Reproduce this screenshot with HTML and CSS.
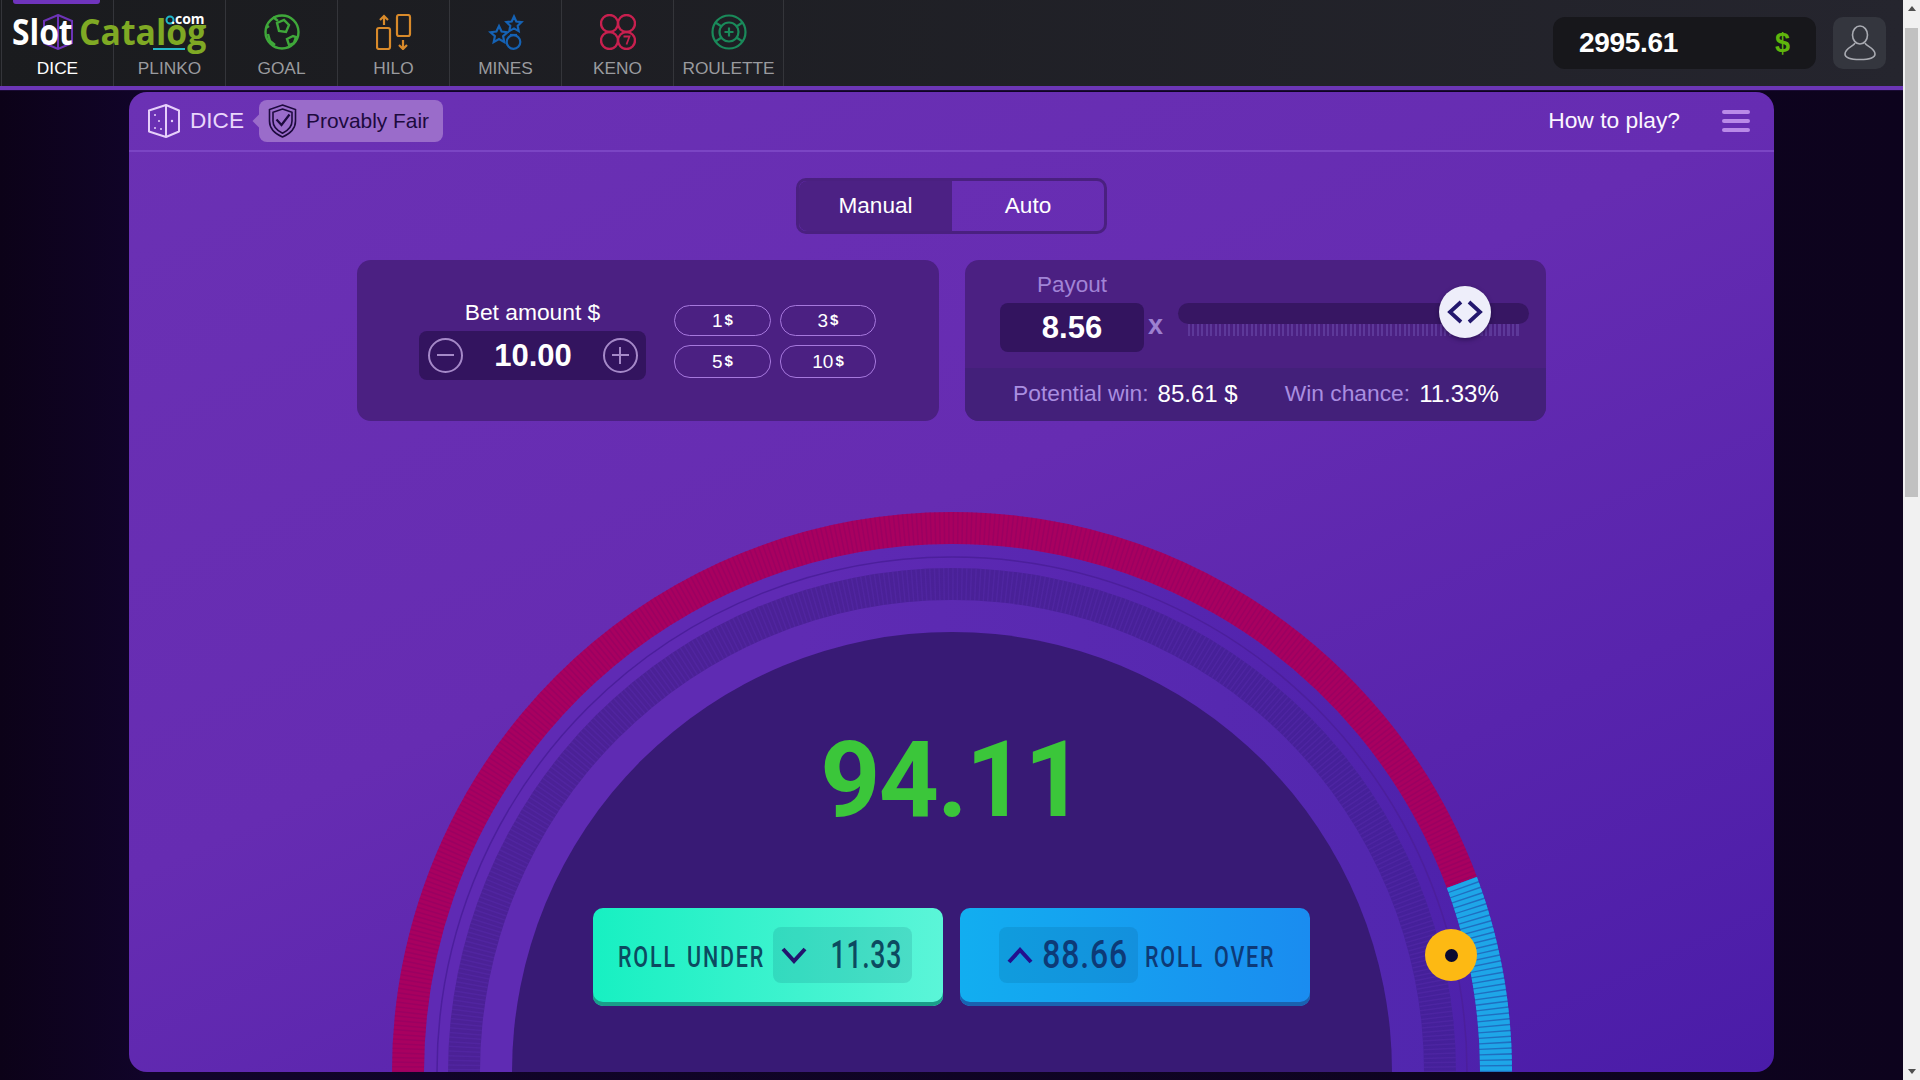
FILE: index.html
```html
<!DOCTYPE html>
<html lang="en">
<head>
<meta charset="utf-8">
<title>Dice</title>
<link rel="stylesheet" href="styles.css">
</head>
<body>
<div class="page">
  <div class="app">
    <header class="topbar">
      <nav class="tabs">
        <a class="tab active"><svg class="tab-icon" viewBox="0 0 36 36" fill="none" stroke="#6d33b8" stroke-width="2"><path d="M18 1l14 6v22l-14 6-14-6V7z"/><path d="M18 1v34"/></svg><span>DICE</span></a>
        <a class="tab"><svg class="tab-icon" viewBox="0 0 36 36" fill="none" stroke="#1fb6c9" stroke-width="2"><circle cx="18" cy="6" r="3.500"/></svg><span>PLINKO</span></a>
        <a class="tab"><svg class="tab-icon" viewBox="0 0 36 36" fill="none" stroke="#3fa83a" stroke-width="2.400"><circle cx="18" cy="18" r="16.500"/><path d="M13 9l7-3 5 5-3 7-7-1z"/><path d="M23 25l6-3 3 1-2 6-5 2z"/><path d="M4 20l2 7 5 4M9 3l5 4M2 14l3-2"/></svg><span>GOAL</span></a>
        <a class="tab"><svg class="tab-icon" viewBox="0 0 36 36" fill="none" stroke="#d98a2a" stroke-width="2.200"><rect x="1" y="14" width="13" height="21" rx="2"/><rect x="21" y="1" width="13" height="21" rx="2"/><path d="M8 11V2M4 6l4-4 4 4M27 26v9M23 31l4 4 4-4"/></svg><span>HILO</span></a>
        <a class="tab"><svg class="tab-icon" viewBox="0 0 36 36" fill="none" stroke="#1562b4" stroke-width="2.200"><path d="M26 2.500l2.300 5 5.200.6-3.800 3.700 1 5.300-4.700-2.700-4.700 2.700 1-5.300-3.800-3.700 5.200-.6z"/><path d="M11 12l2.600 5.500 5.900.7-4.400 4 1.200 5.900-5.300-3-5.300 3 1.200-5.900-4.400-4 5.900-.7z"/><circle cx="25.500" cy="28" r="6.800"/><path d="M22 21h7"/></svg><span>MINES</span></a>
        <a class="tab"><svg class="tab-icon" viewBox="0 0 36 36" fill="none" stroke="#c8204f" stroke-width="2.400"><circle cx="9.500" cy="9.500" r="8.500"/><circle cx="26.500" cy="9.500" r="8.500"/><circle cx="9.500" cy="26.500" r="8.500"/><circle cx="26.500" cy="26.500" r="8.500"/><path d="M23.500 22.500h6l-3 8" stroke-width="1.800"/></svg><span>KENO</span></a>
        <a class="tab"><svg class="tab-icon" viewBox="0 0 36 36" fill="none" stroke="#1a8a5a" stroke-width="2.200"><circle cx="18" cy="18" r="16.500"/><circle cx="18" cy="18" r="9.500"/><path d="M18 13.500v9M13.500 18h9"/><path d="M4.500 8.500l6 4M31.500 8.500l-6 4M4.500 27.500l6-4M31.500 27.500l-6-4"/></svg><span>ROULETTE</span></a>
      </nav>
      <div class="account">
        <div class="balance"><span class="balance-value">2995.61</span><span class="balance-cur">$</span></div>
        <button class="user"><svg width="32" height="36" viewBox="0 0 32 36" fill="none" stroke="#a9abb2" stroke-width="1.600"><ellipse cx="16" cy="10" rx="7.500" ry="9"/><path d="M11 18c-1 3-10 5-10 11 0 4 7 5.500 15 5.500S31 33 31 29c0-6-9-8-10-11"/></svg></button>
      </div>
      <div class="logo"><span class="logo-slot">Slot</span><span class="logo-cat">Catalog</span><span class="logo-com">.com</span><span class="logo-line"></span></div>
    </header>

    <main class="stagewrap">
      <section class="panel">
        <div class="panel-head">
          <div class="head-left">
            <svg class="dice-icon" width="34" height="34" viewBox="0 0 34 34" fill="none" stroke="#e6cffa" stroke-width="2"><path d="M19 1l13 5.500v21L19 33 2 27.500v-21z" stroke-linejoin="round"/><path d="M19 1v32" /><circle cx="8" cy="11" r="1" fill="#e6cffa" stroke="none"/><circle cx="12" cy="17" r="1" fill="#e6cffa" stroke="none"/><circle cx="8" cy="24" r="1" fill="#e6cffa" stroke="none"/><circle cx="14" cy="25" r="1" fill="#e6cffa" stroke="none"/><circle cx="25" cy="17" r="1.200" fill="#e6cffa" stroke="none"/></svg>
            <span class="head-title">DICE</span>
            <div class="fair"><svg width="29" height="34" viewBox="0 0 29 34" fill="none" stroke="#1d0a3e" stroke-width="1.600"><path d="M14.500 1L27.500 5.500V17c0 8-6 13-13 16C7.500 30 1.500 25 1.500 17V5.500z"/><path d="M14.500 5L24 8.300V17c0 6-4.500 9.800-9.500 12.200C9.500 26.800 5 23 5 17V8.300z"/><path d="M8.500 15.500l5 5.500 8-10.500" stroke-width="2.200"/></svg><span>Provably Fair</span></div>
          </div>
          <div class="head-right">
            <span class="howto">How to play?</span>
            <div class="burger"><i></i><i></i><i></i></div>
          </div>
        </div>

        <div class="mode">
          <button class="mode-btn on">Manual</button>
          <button class="mode-btn">Auto</button>
        </div>

        <div class="cards">
          <div class="card bet">
            <div class="bet-main">
              <div class="bet-label">Bet amount $</div>
              <div class="bet-input">
                <span class="round"><i class="bar-h"></i></span>
                <span class="bet-value">10.00</span>
                <span class="round"><i class="bar-h"></i><i class="bar-v"></i></span>
              </div>
            </div>
            <div class="chips">
              <button class="chip">1<small>$</small></button>
              <button class="chip">3<small>$</small></button>
              <button class="chip">5<small>$</small></button>
              <button class="chip">10<small>$</small></button>
            </div>
          </div>
          <div class="card payout">
            <div class="payout-top">
              <div class="payout-col">
                <div class="payout-label">Payout</div>
                <div class="payout-input">8.56</div>
              </div>
              <span class="payout-x">x</span>
              <div class="slider">
                <div class="track"></div>
                <div class="ticks"></div>
                <div class="thumb"><svg width="36" height="24" viewBox="0 0 36 24" fill="none" stroke="#23186e" stroke-width="3.800"><path d="M14 2L3 12l11 10M22 2l11 10-11 10"/></svg></div>
              </div>
            </div>
            <div class="payout-bottom">
              <span class="stat-label">Potential win:</span><span class="stat-value">85.61 $</span>
              <span class="stat-label second">Win chance:</span><span class="stat-value">11.33%</span>
            </div>
          </div>
        </div>

        <div class="stage">
          <svg class="wheel" viewBox="129 421 1645 651" width="1645" height="651" fill="none">
            <defs>
              <linearGradient id="ringLight" gradientUnits="userSpaceOnUse" x1="800" y1="0" x2="1500" y2="0"><stop offset="0" stop-color="#5f2bb3"/><stop offset="1" stop-color="#5026ae"/></linearGradient>
              <linearGradient id="ringDark" gradientUnits="userSpaceOnUse" x1="800" y1="0" x2="1500" y2="0"><stop offset="0" stop-color="#4b2196"/><stop offset="1" stop-color="#44209a"/></linearGradient>
              <linearGradient id="ringMid" gradientUnits="userSpaceOnUse" x1="800" y1="0" x2="1500" y2="0"><stop offset="0" stop-color="#5f2ab4"/><stop offset="1" stop-color="#4d21ab"/></linearGradient>
            </defs>
            <circle cx="952" cy="1072" r="528" fill="url(#ringMid)"/>
            <circle cx="952" cy="1072" r="515" stroke="#4c1f9c" stroke-width="1.500"/>
            <circle cx="952" cy="1072" r="504" fill="url(#ringDark)"/>
            <circle cx="952" cy="1072" r="488" stroke="#5a2cae" stroke-width="32" stroke-dasharray="1.500 3" opacity=".4"/>
            <circle cx="952" cy="1072" r="472" fill="url(#ringLight)"/>
            <circle cx="952" cy="1072" r="440" fill="#381a75"/>
            <path d="M408 1072A544 544 0 0 1 1461.900 882.400" stroke="#a80060" stroke-width="32"/>
            <path d="M408 1072A544 544 0 0 1 1461.900 882.400" stroke="#8c0064" stroke-width="32" stroke-dasharray="1.500 3" opacity=".45"/>
            <path d="M1461.900 882.400A544 544 0 0 1 1496 1072" stroke="#1f6fc0" stroke-width="32"/>
            <path d="M1461.900 882.400A544 544 0 0 1 1496 1072" stroke="#1ea6e8" stroke-width="32" stroke-dasharray="4.300 1.400"/>
          </svg>
          <div class="result">94.11</div>
          <div class="rolls">
            <button class="roll under">
              <span class="roll-text"><span class="squeeze">ROLL UNDER</span></span>
              <span class="roll-box"><svg width="26" height="17" viewBox="0 0 26 17" fill="none" stroke="#23156e" stroke-width="4"><path d="M2 2l11 12L24 2"/></svg><b class="roll-num">11.33</b></span>
            </button>
            <button class="roll over">
              <span class="roll-box"><svg width="26" height="17" viewBox="0 0 26 17" fill="none" stroke="#23108e" stroke-width="4"><path d="M2 15L13 3l11 12"/></svg><b class="roll-num">88.66</b></span>
              <span class="roll-text"><span class="squeeze">ROLL OVER</span></span>
            </button>
          </div>
          <div class="marker"><i></i></div>
        </div>
      </section>
    </main>
  </div>
  <aside class="scrollbar">
    <span class="arrow up"></span>
    <div class="scroll-track"><div class="scroll-thumb"></div></div>
    <span class="arrow down"></span>
  </aside>
</div>
</body>
</html>
```

FILE: styles.css
```css
* { box-sizing: border-box; }
html, body { margin: 0; height: 100%; overflow: hidden; }
body { font-family: "Liberation Sans", Arial, sans-serif; background: #0d031d; color: #fff; }
button { font-family: inherit; border: 0; background: none; color: inherit; padding: 0; }

.page { display: flex; width: 1920px; height: 1080px; }
.app { flex: 1; min-width: 0; display: flex; flex-direction: column; background: linear-gradient(90deg, #0c0218, #11042a 8%, #0d031d 100%); }

.topbar { position: relative; height: 90px; flex: none; display: flex; justify-content: space-between; padding: 0 17px 0 1px; background: linear-gradient(90deg, #1a1b1e, #25252e); border-bottom: 4px solid #6c36b6; box-shadow: 0 1px 0 #1a0a35; }
.tabs { display: flex; border-left: 1px solid #34353a; }
.tab { position: relative; width: 112px; height: 86px; display: flex; flex-direction: column; align-items: center; padding-top: 14px; border-right: 1px solid #34353a; color: #9a9b9f; font-size: 17.300px; line-height: 20px; }
.tab:last-child { width: 110px; }
.tab.active { color: #fff; }
.tab.active::before { content: ""; position: absolute; left: 11px; top: 0; width: 87px; height: 4px; background: #6f34bd; border-radius: 0 0 3px 3px; }
.tab-icon { width: 36px; height: 36px; margin-bottom: 8px; }

.account { display: flex; gap: 17px; padding-top: 17px; }
.balance { width: 263px; height: 52px; display: flex; align-items: center; justify-content: space-between; padding: 0 26px; background: #17171b; border-radius: 12px; }
.balance-value { font-size: 28px; font-weight: 700; letter-spacing: -.3px; }
.balance-cur { color: #5fb50c; font-size: 27px; font-weight: 700; }
.user { width: 53px; height: 52px; display: flex; align-items: center; justify-content: center; background: #34363e; border-radius: 10px; }

.logo { position: absolute; left: 12px; top: 8px; width: 200px; height: 50px; font-family: "Open Sans", sans-serif; font-weight: 700; }
.logo-slot { position: absolute; left: 0; top: 1px; font-size: 36.500px; line-height: 44px; color: #fff; transform: scaleX(.87); transform-origin: left; }
.logo-cat { position: absolute; left: 67px; top: 1px; font-size: 36.500px; line-height: 44px; color: #7fa924; transform: scaleX(.925); transform-origin: left; }
.logo-com { position: absolute; left: 159px; top: 2px; font-size: 14px; line-height: 18px; color: #fff; }
.logo-line { position: absolute; left: 141px; top: 40px; width: 32px; height: 2px; background: #25b7c9; }

.stagewrap { flex: 1; display: flex; justify-content: center; padding-top: 2px; min-height: 0; }
.panel { width: 1645px; height: 980px; display: flex; flex-direction: column; align-items: center; overflow: hidden; border-radius: 18px; background: linear-gradient(155deg, #6b31b4 0%, #662cb2 45%, #4a1ca8 100%); }

.panel-head { width: 100%; height: 60px; flex: none; display: flex; align-items: center; justify-content: space-between; padding: 0 24px 0 18px; border-bottom: 2px solid #7b45c4; }
.head-left { display: flex; align-items: center; }
.head-title { margin-left: 9px; font-size: 22.600px; color: #e9d6fb; }
.dice-icon { flex: none; }
.fair { position: relative; margin-left: 15px; width: 184px; height: 42px; display: flex; align-items: center; gap: 9px; padding-left: 9px; background: #9a6cca; border-radius: 8px; color: #1d0a3e; font-size: 20.900px; }
.fair::before { content: ""; position: absolute; left: -4px; top: 15px; width: 12px; height: 12px; background: #9a6cca; transform: rotate(45deg); }
.fair svg { position: relative; }
.fair span { position: relative; padding-bottom: 1px; }
.head-right { display: flex; align-items: center; gap: 42px; }
.howto { font-size: 22.800px; color: #fbf6ff; padding-bottom: 2px; }
.burger { width: 28px; display: flex; flex-direction: column; gap: 5px; }
.burger i { display: block; height: 4px; border-radius: 2px; background: #b98ae8; }

.mode { margin-top: 26px; flex: none; width: 311px; height: 56px; display: flex; border: 3px solid #4a2080; border-radius: 10px; }
.mode-btn { flex: 1; font-size: 22.600px; color: #fff; }
.mode-btn.on { flex: none; width: 153px; background: #4c2184; border-radius: 8px 0 0 8px; }

.cards { margin-top: 26px; flex: none; display: flex; gap: 26px; }
.card { width: 582px; height: 161px; border-radius: 14px; background: #4b2082; overflow: hidden; }
.bet { display: flex; padding: 39px 0 0 62px; }
.bet-main { width: 227px; display: flex; flex-direction: column; align-items: center; }
.bet-label { font-size: 22.800px; line-height: 26px; margin-bottom: 6px; }
.bet-input { width: 227px; height: 49px; display: flex; align-items: center; justify-content: space-between; padding: 0 8px 0 9px; background: #33145f; border-radius: 8px; }
.bet-value { font-size: 31px; font-weight: 700; }
.round { position: relative; width: 35px; height: 35px; border: 2px solid #a589c8; border-radius: 50%; }
.bar-h, .bar-v { position: absolute; background: #a589c8; }
.bar-h { left: 7px; right: 7px; top: 14px; height: 2px; }
.bar-v { top: 7px; bottom: 7px; left: 14px; width: 2px; }
.chips { margin: 6px 0 0 28px; width: 202px; height: 73px; display: grid; grid-template-columns: 97px 96px; grid-template-rows: 31px 33px; gap: 9px; }
.chip { border: 1px solid #a678dd; border-radius: 16px; font-size: 19px; color: #fff; }
.chip small { font-size: 15px; font-weight: 700; margin-left: 2px; vertical-align: 2px; }

.payout { width: 581px; display: flex; flex-direction: column; }
.payout-top { flex: 1; display: flex; padding-left: 35px; }
.payout-col { width: 144px; display: flex; flex-direction: column; align-items: center; }
.payout-label { margin-top: 12px; font-size: 22.500px; line-height: 26px; color: #a184d6; margin-bottom: 5px; }
.payout-input { height: 49px; width: 144px; display: flex; align-items: center; justify-content: center; background: #33145f; border-radius: 8px; font-size: 31px; font-weight: 700; }
.payout-x { margin: 50px 0 0 4px; width: 30px; font-size: 27px; line-height: 30px; font-weight: 700; color: #9d80d0; }
.slider { position: relative; width: 351px; margin-top: 43px; }
.track { height: 21px; border-radius: 11px; background: #371663; }
.ticks { margin: 0 8px 0 10px; height: 12px; background: repeating-linear-gradient(90deg, #5d3899 0 2px, transparent 2px 4.500px); }
.thumb { position: absolute; left: 261px; top: -17px; width: 52px; height: 52px; display: flex; align-items: center; justify-content: center; border-radius: 50%; background: #eeeefa; box-shadow: 0 2px 4px rgba(20, 5, 50, .5); }
.payout-bottom { height: 53px; flex: none; display: flex; align-items: center; padding: 0 0 2px 48px; background: #43207a; font-size: 22.800px; }
.stat-label { color: #a98ee0; }
.stat-label.second { margin-left: 47px; }
.stat-value { color: #fff; margin-left: 9px; font-size: 24px; }

.stage { position: relative; width: 100%; flex: 1; min-height: 0; display: flex; flex-direction: column; align-items: center; }
.wheel { position: absolute; left: 0; top: 0; }
.result { position: relative; margin-top: 295px; font-family: Roboto, sans-serif; font-weight: 700; font-size: 105px; line-height: 130px; letter-spacing: -1.800px; color: #3bc63a; }
.rolls { position: relative; margin-top: 62px; display: flex; gap: 17px; }
.roll { width: 350px; height: 98px; display: flex; align-items: center; gap: 7px; padding-bottom: 4px; border-radius: 10px; }
.under { padding-left: 25px; background: linear-gradient(90deg, #17f0c2, #5bf5d8); box-shadow: inset 0 -4px 0 #1a9e8a; color: #0c4a60; }
.over { padding-left: 39px; background: linear-gradient(90deg, #12aef0, #1a8cf0); box-shadow: inset 0 -4px 0 #1a62b0; color: #0d3a77; }
.roll-text { display: block; margin-top: 4px; width: 148px; text-align: left; }
.over .roll-text { width: 134px; }
.squeeze { display: inline-block; font-family: Roboto, sans-serif; font-weight: 500; font-size: 29px; letter-spacing: 2.500px; word-spacing: 4px; white-space: nowrap; transform: scaleX(.74); transform-origin: left; }
.roll-box { width: 139px; height: 56px; display: flex; align-items: center; justify-content: space-between; padding: 0 10px 0 8px; border-radius: 8px; background: rgba(0, 60, 90, .13); }
.roll-box svg { flex: none; }
.roll-num { display: inline-block; margin-left: -20px; font-family: Roboto, sans-serif; font-size: 38px; font-weight: 500; letter-spacing: 1px; transform: scaleX(.84); transform-origin: right; }
.under .roll-num { transform: scaleX(.7); }
.marker { position: absolute; left: 1296px; top: 508px; width: 52px; height: 52px; display: flex; align-items: center; justify-content: center; border-radius: 50%; background: #fdb913; }
.marker i { width: 13px; height: 13px; border-radius: 50%; background: #0a0a30; }

.scrollbar { width: 17px; flex: none; display: flex; flex-direction: column; background: #f1f1f1; }
.arrow { height: 17px; flex: none; display: flex; align-items: center; justify-content: center; }
.arrow::before { content: ""; border-left: 4px solid transparent; border-right: 4px solid transparent; }
.arrow.up::before { border-bottom: 5px solid #505050; }
.arrow.down::before { border-top: 5px solid #505050; }
.scroll-track { flex: 1; padding: 11px 2px 0; }
.scroll-thumb { height: 469px; background: #c1c1c1; }
```
